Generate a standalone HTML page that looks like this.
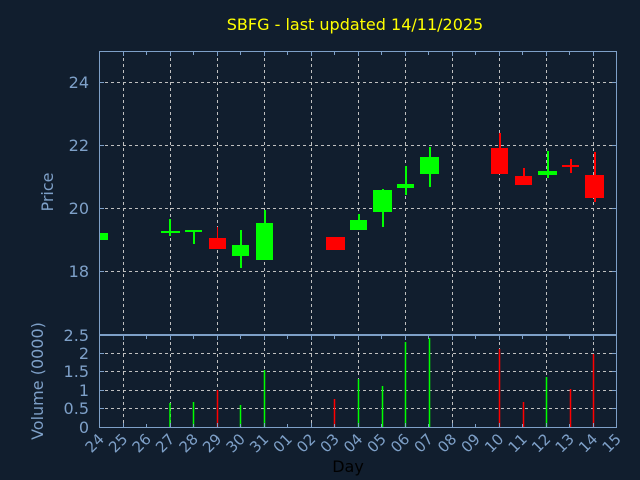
<!DOCTYPE html>
<html><head><meta charset="utf-8"><style>
html,body{margin:0;padding:0;background:#111e2e;}
svg{display:block;}
text{font-family:"DejaVu Sans","Liberation Sans",sans-serif;}
</style></head><body>
<svg width="640" height="480" viewBox="0 0 640 480" xmlns="http://www.w3.org/2000/svg">
<rect width="640" height="480" fill="#111e2e"/>
<text x="355" y="30" fill="#ffff00" font-size="16" text-anchor="middle">SBFG - last updated 14/11/2025</text>

<g stroke="#c0c0c0" stroke-width="1" stroke-dasharray="3,3" fill="none">
<!-- price horizontal grid -->
<line x1="99" y1="82.5" x2="617" y2="82.5"/>
<line x1="99" y1="145.5" x2="617" y2="145.5"/>
<line x1="99" y1="208.5" x2="617" y2="208.5"/>
<line x1="99" y1="271.5" x2="617" y2="271.5"/>
<!-- volume horizontal grid -->
<line x1="99" y1="408.5" x2="617" y2="408.5"/>
<line x1="99" y1="390.5" x2="617" y2="390.5"/>
<line x1="99" y1="371.5" x2="617" y2="371.5"/>
<line x1="99" y1="353.5" x2="617" y2="353.5"/>
<!-- vertical grid -->
<path d="M123.5 52V334M170.5 52V334M217.5 52V334M264.5 52V334M311.5 52V334M358.5 52V334M405.5 52V334M452.5 52V334M499.5 52V334M546.5 52V334M593.5 52V334"/>
<path d="M123.5 336V427M170.5 336V427M217.5 336V427M264.5 336V427M311.5 336V427M358.5 336V427M405.5 336V427M452.5 336V427M499.5 336V427M546.5 336V427M593.5 336V427"/>
</g>

<!-- candles -->
<g>
<rect x="99" y="233" width="9" height="7" fill="#00ff00"/>
<rect x="169" y="219" width="2" height="17" fill="#00ff00"/><rect x="161" y="231" width="19" height="2" fill="#00ff00"/>
<rect x="193" y="230" width="2" height="14" fill="#00ff00"/><rect x="185" y="230" width="17" height="2" fill="#00ff00"/>
<rect x="217" y="227" width="1" height="11" fill="#ff0000"/><rect x="209" y="238" width="17" height="11" fill="#ff0000"/>
<rect x="240" y="230" width="2" height="38" fill="#00ff00"/><rect x="232" y="245" width="17" height="11" fill="#00ff00"/>
<rect x="264" y="210" width="2" height="50" fill="#00ff00"/><rect x="256" y="223" width="17" height="37" fill="#00ff00"/>
<rect x="326" y="237" width="19" height="13" fill="#ff0000"/>
<rect x="358" y="214" width="2" height="16" fill="#00ff00"/><rect x="350" y="220" width="17" height="10" fill="#00ff00"/>
<rect x="382" y="189" width="2" height="38" fill="#00ff00"/><rect x="373" y="190" width="19" height="22" fill="#00ff00"/>
<rect x="405" y="166" width="2" height="29" fill="#00ff00"/><rect x="397" y="184" width="17" height="4" fill="#00ff00"/>
<rect x="429" y="147" width="2" height="40" fill="#00ff00"/><rect x="420" y="157" width="19" height="17" fill="#00ff00"/>
<rect x="499" y="133" width="2" height="15" fill="#ff0000"/><rect x="491" y="148" width="17" height="26" fill="#ff0000"/>
<rect x="523" y="168" width="2" height="10" fill="#ff0000"/><rect x="515" y="176" width="17" height="9" fill="#ff0000"/>
<rect x="547" y="151" width="2" height="27" fill="#00ff00"/><rect x="538" y="171" width="19" height="4" fill="#00ff00"/>
<rect x="570" y="159" width="2" height="14" fill="#ff0000"/><rect x="562" y="165" width="17" height="2" fill="#ff0000"/>
<rect x="594" y="152" width="2" height="50" fill="#ff0000"/><rect x="585" y="175" width="19" height="23" fill="#ff0000"/>
</g>

<!-- volume bars -->
<g stroke-width="1.5">
<line x1="170" y1="403" x2="170" y2="427" stroke="#00ff00"/>
<line x1="193.5" y1="402" x2="193.5" y2="427" stroke="#00ff00"/>
<line x1="217.5" y1="390" x2="217.5" y2="427" stroke="#ff0000"/>
<line x1="240.5" y1="405" x2="240.5" y2="427" stroke="#00ff00"/>
<line x1="264.5" y1="370" x2="264.5" y2="427" stroke="#00ff00"/>
<line x1="334.5" y1="399" x2="334.5" y2="427" stroke="#ff0000"/>
<line x1="358.5" y1="379" x2="358.5" y2="427" stroke="#00ff00"/>
<line x1="382.5" y1="386" x2="382.5" y2="427" stroke="#00ff00"/>
<line x1="405.5" y1="342" x2="405.5" y2="427" stroke="#00ff00"/>
<line x1="429.5" y1="338" x2="429.5" y2="427" stroke="#00ff00"/>
<line x1="499.5" y1="349" x2="499.5" y2="427" stroke="#ff0000"/>
<line x1="523.5" y1="402" x2="523.5" y2="427" stroke="#ff0000"/>
<line x1="546.5" y1="377" x2="546.5" y2="427" stroke="#00ff00"/>
<line x1="570.5" y1="389" x2="570.5" y2="427" stroke="#ff0000"/>
<line x1="593.5" y1="354" x2="593.5" y2="427" stroke="#ff0000"/>
</g>

<!-- frames -->
<g stroke="#7ea0c8" stroke-width="1" fill="none">
<rect x="99.5" y="51.5" width="517" height="283"/>
<path d="M99.5 335.5H616.5V427.5H99.5Z"/>
<path d="M99 82.5h5M99 145.5h5M99 208.5h5M99 271.5h5M612 82.5h5M612 145.5h5M612 208.5h5M612 271.5h5"/>
<path d="M99 408.5h5M99 390.5h5M99 371.5h5M99 353.5h5M612 408.5h5M612 390.5h5M612 371.5h5M612 353.5h5"/>
<path d="M123.5 52v4M146.5 52v3M170.5 52v4M193.5 52v3M217.5 52v4M240.5 52v3M264.5 52v4M287.5 52v3M311.5 52v4M334.5 52v3M358.5 52v4M381.5 52v3M405.5 52v4M428.5 52v3M452.5 52v4M475.5 52v3M499.5 52v4M522.5 52v3M546.5 52v4M569.5 52v3M593.5 52v4"/>
<path d="M123.5 336v4M146.5 336v3M170.5 336v4M193.5 336v3M217.5 336v4M240.5 336v3M264.5 336v4M287.5 336v3M311.5 336v4M334.5 336v3M358.5 336v4M381.5 336v3M405.5 336v4M428.5 336v3M452.5 336v4M475.5 336v3M499.5 336v4M522.5 336v3M546.5 336v4M569.5 336v3M593.5 336v4"/>
<path d="M123.5 427v-4M146.5 427v-3M170.5 427v-4M193.5 427v-3M217.5 427v-4M240.5 427v-3M264.5 427v-4M287.5 427v-3M311.5 427v-4M334.5 427v-3M358.5 427v-4M381.5 427v-3M405.5 427v-4M428.5 427v-3M452.5 427v-4M475.5 427v-3M499.5 427v-4M522.5 427v-3M546.5 427v-4M569.5 427v-3M593.5 427v-4"/>
</g>

<!-- y labels -->
<g fill="#7ea0c8" font-size="16" text-anchor="end">
<text x="89" y="88">24</text>
<text x="89" y="151">22</text>
<text x="89" y="214">20</text>
<text x="89" y="277">18</text>
<text x="89" y="341">2.5</text>
<text x="89" y="359">2</text>
<text x="89" y="377">1.5</text>
<text x="89" y="396">1</text>
<text x="89" y="414">0.5</text>
<text x="89" y="433">0</text>
</g>
<text transform="translate(53,192) rotate(-90)" fill="#7ea0c8" font-size="16" text-anchor="middle">Price</text>
<text transform="translate(43,381) rotate(-90)" fill="#7ea0c8" font-size="16" text-anchor="middle">Volume (0000)</text>

<!-- x labels -->
<g fill="#7ea0c8" font-size="15" text-anchor="end">
<text transform="translate(105,440) rotate(-45)">24</text>
<text transform="translate(128.5,440) rotate(-45)">25</text>
<text transform="translate(152,440) rotate(-45)">26</text>
<text transform="translate(175.5,440) rotate(-45)">27</text>
<text transform="translate(199,440) rotate(-45)">28</text>
<text transform="translate(222.5,440) rotate(-45)">29</text>
<text transform="translate(246,440) rotate(-45)">30</text>
<text transform="translate(269.5,440) rotate(-45)">31</text>
<text transform="translate(293,440) rotate(-45)">01</text>
<text transform="translate(316.5,440) rotate(-45)">02</text>
<text transform="translate(340,440) rotate(-45)">03</text>
<text transform="translate(363.5,440) rotate(-45)">04</text>
<text transform="translate(387,440) rotate(-45)">05</text>
<text transform="translate(410.5,440) rotate(-45)">06</text>
<text transform="translate(434,440) rotate(-45)">07</text>
<text transform="translate(457.5,440) rotate(-45)">08</text>
<text transform="translate(481,440) rotate(-45)">09</text>
<text transform="translate(504.5,440) rotate(-45)">10</text>
<text transform="translate(528,440) rotate(-45)">11</text>
<text transform="translate(551.5,440) rotate(-45)">12</text>
<text transform="translate(575,440) rotate(-45)">13</text>
<text transform="translate(598.5,440) rotate(-45)">14</text>
<text transform="translate(622,440) rotate(-45)">15</text>
</g>
<text x="348" y="472" fill="#000000" font-size="16" text-anchor="middle">Day</text>
</svg>
</body></html>
